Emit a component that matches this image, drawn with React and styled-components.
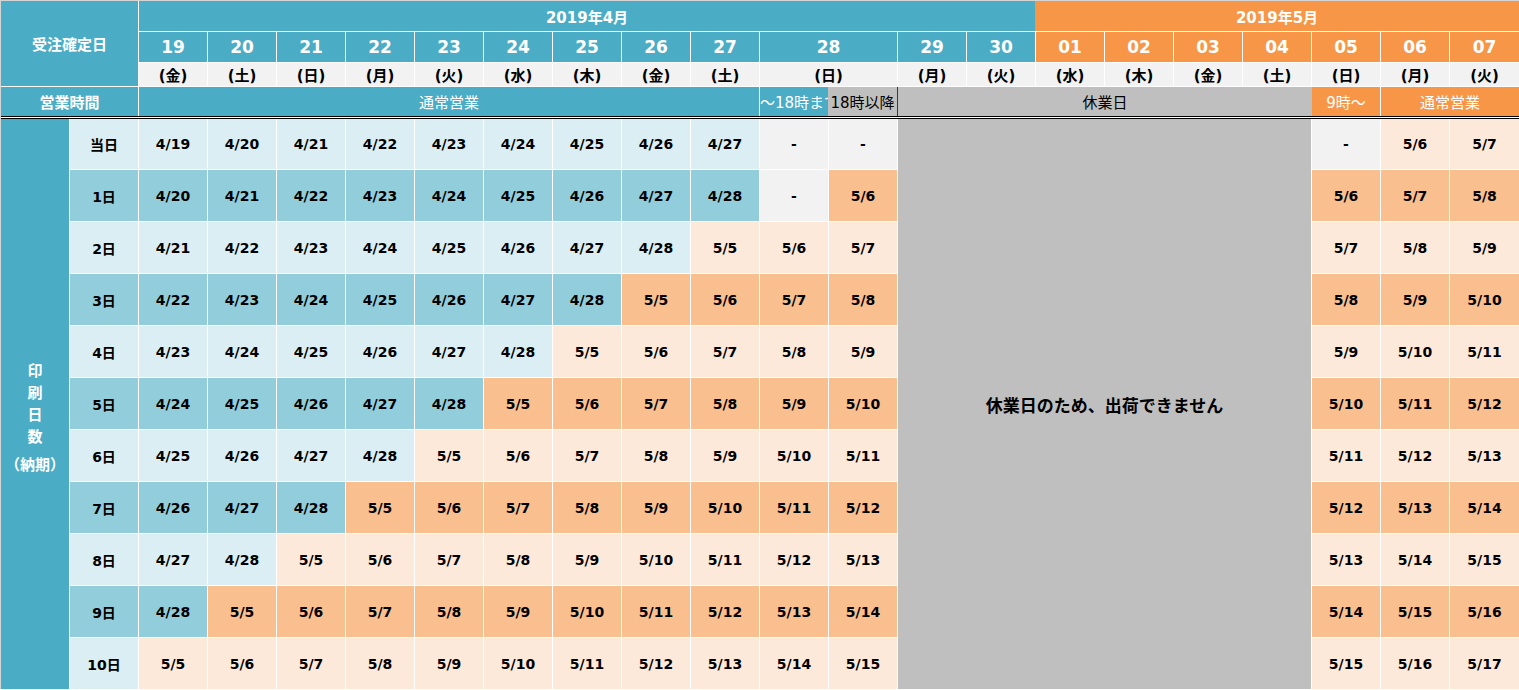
import React from 'react';
import styled, { createGlobalStyle, css } from 'styled-components';

const JP = `"Noto Sans CJK JP", "Noto Sans", sans-serif`;
const NUM = `"DejaVu Sans", "Noto Sans CJK JP", sans-serif`;

const BLUE = '#4BACC6';
const ORANGE = '#F79646';
const GRAY = '#BFBFBF';
const PALE = '#F2F2F2';

const fills = {
    blueLight: '#DAEEF3',
    blueMid: '#92CDDC',
    orangeLight: '#FDE9D9',
    orangeMid: '#FABF8F',
    blank: PALE,
};

const days = [
    ['19', '金'], ['20', '土'], ['21', '日'], ['22', '月'], ['23', '火'],
    ['24', '水'], ['25', '木'], ['26', '金'], ['27', '土'], ['28', '日', 2],
    ['29', '月'], ['30', '火'], ['01', '水'], ['02', '木'], ['03', '金'],
    ['04', '土'], ['05', '日'], ['06', '月'], ['07', '火'],
];

// which sheet column, the first delivery index, and how many leading rows are "-"
const bodyCols = [
    { col: 2, base: 0 }, { col: 3, base: 1 }, { col: 4, base: 2 },
    { col: 5, base: 3 }, { col: 6, base: 4 }, { col: 7, base: 5 },
    { col: 8, base: 6 }, { col: 9, base: 7 }, { col: 10, base: 8 },
    { col: 11, base: 9, blanks: 2 }, { col: 12, base: 10, blanks: 1 },
    { col: 19, base: 10, blanks: 1 }, { col: 20, base: 11 }, { col: 21, base: 12 },
];

const rowLabels = ['当日', '1日', '2日', '3日', '4日', '5日', '6日', '7日', '8日', '9日', '10日'];

const dateOf = (i) => (i <= 9 ? `4/${19 + i}` : `5/${i - 5}`);

const GlobalStyle = createGlobalStyle`
    body {
        margin: 0;
        background: #fff;
    }
`;

const placed = css`
    grid-column: ${(p) => p.$col + 1} / span ${(p) => p.$cs || 1};
    grid-row: ${(p) => p.$row + 1} / span ${(p) => p.$rs || 1};
`;

const Sheet = styled.div`
    display: grid;
    width: 1519px;
    box-sizing: border-box;
    grid-template-columns: repeat(21, 68px) 1fr;
    grid-template-rows: 30px 30px 23px 29px 1px 50px repeat(10, 51px);
    gap: 1px;
    background: #fff;
    border-top: 1px solid #d4d4d4;
    border-left: 1px solid #d4d4d4;
`;

const Corner = styled.div`
    ${placed};
    display: flex;
    align-items: center;
    justify-content: center;
    background: ${BLUE};
    color: #fff;
    font-family: ${JP};
    font-weight: 700;
    font-size: 15px;
`;

const MonthCell = styled.div`
    ${placed};
    display: flex;
    align-items: center;
    justify-content: center;
    background: ${(p) => (p.$may ? ORANGE : BLUE)};
    color: #fff;
    font-family: ${NUM};
    font-weight: 700;
    font-size: 15px;
    ${(p) => p.$may && 'margin-left: -1px;'}
`;

const DayNum = styled.div`
    ${placed};
    display: flex;
    align-items: center;
    justify-content: center;
    background: ${(p) => (p.$may ? ORANGE : BLUE)};
    color: #fff;
    font-family: ${NUM};
    font-weight: 700;
    font-size: 17px;
`;

const Weekday = styled.div`
    ${placed};
    display: flex;
    align-items: center;
    justify-content: center;
    background: ${PALE};
    color: #000;
    font-family: ${NUM};
    font-weight: 700;
    font-size: 15px;
`;

const HoursCell = styled.div`
    ${placed};
    display: flex;
    align-items: center;
    justify-content: ${(p) => (p.$left ? 'flex-start' : 'center')};
    overflow: hidden;
    white-space: nowrap;
    background: ${(p) => p.$fill};
    color: ${(p) => (p.$fill === GRAY ? '#000' : '#fff')};
    font-family: ${NUM};
    font-size: 15px;
    font-weight: ${(p) => (p.$bold ? 700 : 400)};
`;

const EveningCell = styled(HoursCell)`
    margin: 0 -1px;
    border-right: 1px solid #3a3a3a;
`;

const ClosedHours = styled(HoursCell)`
    margin-right: -1px;
`;

const Rule = styled.div`
    grid-column: 1 / -1;
    grid-row: 5;
    align-self: start;
    height: 3px;
    margin-top: -1px;
    box-sizing: border-box;
    border-top: 1px solid #000;
    border-bottom: 1px solid #000;
    background: #fff;
`;

const SideLabel = styled.div`
    ${placed};
    display: flex;
    flex-direction: column;
    align-items: center;
    justify-content: center;
    padding-top: 26px;
    background: ${BLUE};
    color: #fff;
    font-family: ${JP};
    font-weight: 700;
    font-size: 15px;
    line-height: 22px;
`;

const Note = styled.span`
    margin-top: 6px;
    font-size: 15px;
`;

const RowLabel = styled.div`
    ${placed};
    display: flex;
    align-items: center;
    justify-content: center;
    background: ${(p) => (p.$mid ? fills.blueMid : fills.blueLight)};
    color: #000;
    font-family: ${NUM};
    font-weight: 700;
    font-size: 14px;
`;

const DateCell = styled.div`
    ${placed};
    display: flex;
    align-items: center;
    justify-content: center;
    background: ${(p) => fills[p.$tone]};
    color: #000;
    font-family: ${NUM};
    font-weight: 700;
    font-size: 14px;
`;

const Closed = styled.div`
    ${placed};
    display: flex;
    align-items: center;
    justify-content: center;
    background: ${GRAY};
    color: #000;
    font-family: ${JP};
    font-weight: 700;
    font-size: 17px;
`;

const toneOf = (blank, idx, mid) => {
    if (blank) return 'blank';
    if (idx <= 9) return mid ? 'blueMid' : 'blueLight';
    return mid ? 'orangeMid' : 'orangeLight';
};

export default function App() {
    let col = 2;
    const headers = days.map(([num, wd, span = 1]) => {
        const may = col >= 15;
        const c = col;
        col += span;
        return (
            <React.Fragment key={num}>
                <DayNum $col={c} $cs={span} $row={1} $may={may}>{num}</DayNum>
                <Weekday $col={c} $cs={span} $row={2}>({wd})</Weekday>
            </React.Fragment>
        );
    });

    return (
        <>
            <GlobalStyle />
            <Sheet>
                <Corner $col={0} $cs={2} $row={0} $rs={3}>受注確定日</Corner>
                <MonthCell $col={2} $cs={13} $row={0}>2019年4月</MonthCell>
                <MonthCell $col={15} $cs={7} $row={0} $may>2019年5月</MonthCell>
                {headers}

                <HoursCell $col={0} $cs={2} $row={3} $fill={BLUE} $bold>営業時間</HoursCell>
                <HoursCell $col={2} $cs={9} $row={3} $fill={BLUE}>通常営業</HoursCell>
                <HoursCell $col={11} $row={3} $fill={BLUE} $left>～18時まで</HoursCell>
                <EveningCell $col={12} $row={3} $fill={GRAY}>18時以降</EveningCell>
                <ClosedHours $col={13} $cs={6} $row={3} $fill={GRAY}>休業日</ClosedHours>
                <HoursCell $col={19} $row={3} $fill={ORANGE}>9時～</HoursCell>
                <HoursCell $col={20} $cs={2} $row={3} $fill={ORANGE}>通常営業</HoursCell>

                <Rule />

                <SideLabel $col={0} $row={5} $rs={11}>
                    <span>印</span>
                    <span>刷</span>
                    <span>日</span>
                    <span>数</span>
                    <Note>（納期）</Note>
                </SideLabel>

                {rowLabels.map((label, r) => (
                    <RowLabel key={label} $col={1} $row={5 + r} $mid={r % 2 === 1}>
                        {label}
                    </RowLabel>
                ))}

                {bodyCols.map(({ col: c, base, blanks = 0 }) =>
                    rowLabels.map((_, r) => {
                        const blank = r < blanks;
                        const idx = base + r;
                        return (
                            <DateCell
                                key={`${c}_${r}`}
                                $col={c}
                                $row={5 + r}
                                $tone={toneOf(blank, idx, r % 2 === 1)}>
                                {blank ? '-' : dateOf(idx)}
                            </DateCell>
                        );
                    })
                )}

                <Closed $col={13} $cs={6} $row={5} $rs={11}>休業日のため、出荷できません</Closed>
            </Sheet>
        </>
    );
}
